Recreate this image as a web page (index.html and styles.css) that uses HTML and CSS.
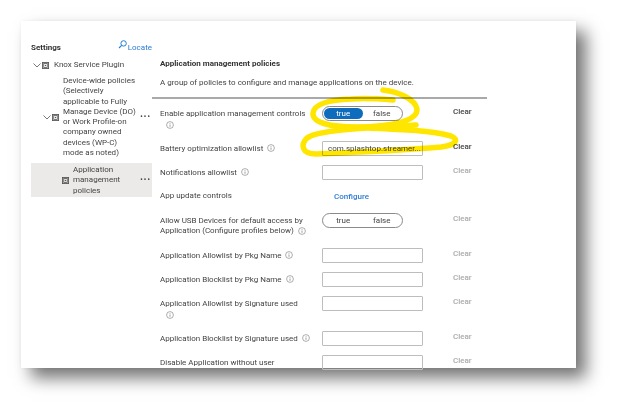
FILE: index.html
```html
<!DOCTYPE html>
<html lang="en">
<head>
<meta charset="utf-8">
<title>Application management policies</title>
<link rel="stylesheet" href="styles.css">
</head>
<body>
<svg width="0" height="0" class="defs" aria-hidden="true">
  <symbol id="plug" viewBox="0 0 8 8"><rect x=".5" y=".5" width="7" height="7" fill="none" stroke="#555"/><rect x="2" y="1.8" width="4" height="4.4" fill="none" stroke="#555" stroke-width=".9"/><rect x="3.3" y="3.3" width="1.4" height="1.4" fill="#555"/></symbol>
  <symbol id="chev" viewBox="0 0 8 5"><path d="M.5.5 4 4 7.5.5" fill="none" stroke="#555" stroke-width=".8"/></symbol>
  <symbol id="info" viewBox="0 0 8 8"><circle cx="4" cy="4" r="3.4" fill="none" stroke="#777" stroke-width=".6"/><path d="M4 3.5v2.3M4 2.2v.7" stroke="#777" stroke-width=".7"/></symbol>
</svg>
<main class="shot">
  <aside class="side">
    <div class="side-head">
      <span class="settings">Settings</span>
      <span class="locate">
        <svg class="search" viewBox="0 0 9 9"><circle cx="5.6" cy="3.4" r="2.7" fill="none" stroke="#1f7fd6"/><path d="M3.6 5.4 1 8" stroke="#1f7fd6" stroke-width="1.1"/></svg>
        <span class="locate-text">Locate</span>
      </span>
    </div>
    <div class="node node-root">
      <svg class="chev"><use href="#chev"/></svg>
      <svg class="plug"><use href="#plug"/></svg>
      <span class="node-text">Knox Service Plugin</span>
    </div>
    <div class="node node-device">
      <svg class="chev"><use href="#chev"/></svg>
      <svg class="plug"><use href="#plug"/></svg>
      <span class="node-text wrap">Device-wide policies (Selectively applicable to Fully Manage Device (DO) or Work Profile-on company owned devices (WP-C) mode as noted)</span>
      <span class="dots">···</span>
    </div>
    <div class="node node-app">
      <svg class="plug"><use href="#plug"/></svg>
      <span class="node-text wrap">Application management policies</span>
      <span class="dots">···</span>
    </div>
  </aside>
  <section class="content">
    <h1 class="title">Application management policies</h1>
    <p class="desc">A group of policies to configure and manage applications on the device.</p>
    <div class="rule"></div>
    <div class="row row-a">
      <div class="label">Enable application management controls <svg class="info info-below"><use href="#info"/></svg></div>
      <div class="toggle"><span class="opt on">true</span><span class="opt">false</span></div>
      <span class="clear dark">Clear</span>
    </div>
    <div class="row row-b">
      <div class="label">Battery optimization allowlist <svg class="info"><use href="#info"/></svg></div>
      <div class="field">com.splashtop.streamer...</div>
      <span class="clear dark">Clear</span>
    </div>
    <div class="row row-c">
      <div class="label">Notifications allowlist <svg class="info"><use href="#info"/></svg></div>
      <div class="field"></div>
      <span class="clear">Clear</span>
    </div>
    <div class="row row-d">
      <div class="label">App update controls</div>
      <a class="configure">Configure</a>
    </div>
    <div class="row row-e">
      <div class="label">Allow USB Devices for default access by Application (Configure profiles below) <svg class="info"><use href="#info"/></svg></div>
      <div class="toggle"><span class="opt">true</span><span class="opt">false</span></div>
      <span class="clear">Clear</span>
    </div>
    <div class="row row-c">
      <div class="label">Application Allowlist by Pkg Name <svg class="info"><use href="#info"/></svg></div>
      <div class="field"></div>
      <span class="clear">Clear</span>
    </div>
    <div class="row row-c">
      <div class="label">Application Blocklist by Pkg Name <svg class="info"><use href="#info"/></svg></div>
      <div class="field"></div>
      <span class="clear">Clear</span>
    </div>
    <div class="row row-f">
      <div class="label">Application Allowlist by Signature used <svg class="info info-below"><use href="#info"/></svg></div>
      <div class="field"></div>
      <span class="clear">Clear</span>
    </div>
    <div class="row row-c">
      <div class="label">Application Blocklist by Signature used <svg class="info"><use href="#info"/></svg></div>
      <div class="field"></div>
      <span class="clear">Clear</span>
    </div>
    <div class="row row-c">
      <div class="label">Disable Application without user</div>
      <div class="field"></div>
      <span class="clear">Clear</span>
    </div>
  </section>
  <svg class="marker" viewBox="0 0 555 347" aria-hidden="true">
    <path d="M362 69C378 71 394 78 396 88C397 100 370 106 335 106C310 106 291 102 292 92C293 84 305 79 330 78C345 77 360 78 372 79" />
    <path d="M325 106C360 108 405 108 430 115C438 118 436 124 420 126C385 129 320 132 295 133C281 133 279 124 286 117C296 109 340 107 395 104" />
  </svg>
</main>
</body>
</html>
```
FILE: styles.css
```css
* { box-sizing: border-box; }
html, body { margin: 0; padding: 0; background: #fff; }
body { width: 617px; height: 410px; overflow: hidden; padding: 21px 0 0 21px; font-family: Roboto, "Open Sans", sans-serif; font-size: 8px; color: #444; }
.defs { position: absolute; }
.shot { position: relative; width: 555px; height: 347px; background: #fff; display: flex; box-shadow: 10px 10px 16px rgba(0,0,0,.55), 0 0 4px rgba(0,0,0,.05); filter: blur(.25px); }
.side { width: 131px; flex: none; padding: 21px 0 0 10px; height: 347px; overflow: hidden; }
.side-head { display: flex; justify-content: space-between; align-items: center; height: 10px; }
.settings { font-weight: 700; color: #333; }
.locate { display: flex; align-items: flex-start; color: #2b7cd3; }
.search { width: 9px; height: 9px; margin-right: 1px; margin-top: -2px; }
.locate-text { line-height: 10px; margin-top: 1px; }
.node { display: flex; align-items: center; line-height: 10.3px; color: #444; }
.chev { width: 8px; height: 5px; flex: none; }
.plug { width: 7px; height: 7px; flex: none; }
.dots { flex: none; width: 11px; font-size: 10px; font-weight: 700; color: #444; letter-spacing: .6px; }
.node-root { margin: 8px 0 0 2px; height: 11px; }
.node-root .plug { margin-left: 1px; }
.node-root .node-text { margin-left: 5px; }
.node-device { margin: 5px 0 0 12px; }
.node-device .plug { margin-left: 1px; }
.node-device .wrap { width: 76px; margin-left: 4px; }
.node-device .dots { margin-left: 1px; }
.node-app { margin-top: 5px; height: 34px; background: #eceae8; padding-left: 31px; }
.node-app .wrap { width: 62px; margin-left: 4px; }
.node-app .dots { margin-left: 5px; }
.content { width: 335px; flex: none; padding-left: 8px; }
.title { font-size: 8px; font-weight: 700; color: #333; margin: 37px 0 0; line-height: 11px; }
.desc { margin: 8px 0 0; line-height: 11px; color: #444; }
.rule { height: 1.5px; background: #a9a9a9; margin: 9px 0 0 -8px; }
.row { display: flex; align-items: flex-start; }
.label { width: 162px; flex: none; line-height: 10.5px; color: #444; padding-top: 3px; padding-right: 8px; }
.info { width: 8px; height: 8px; vertical-align: -1.5px; margin-left: 2px; }
.info-below { display: block; margin: 1.5px 0 0 6px; }
.toggle { width: 81px; height: 15px; flex: none; border: 1px solid #8a8a8a; border-radius: 8px; display: flex; padding: 1px; margin-right: 20px; }
.opt { flex: 1; text-align: center; line-height: 11px; border-radius: 7px; color: #444; }
.opt.on { background: #0f6cbd; color: #fff; }
.field { width: 101px; height: 15px; flex: none; border: 1px solid #bdbdbd; border-radius: 1px; color: #444; padding: 0 5px; line-height: 13px; white-space: nowrap; overflow: hidden; }
.clear { margin-left: 30px; color: #aaa; font-weight: 500; line-height: 11px; }
.clear.dark { color: #444; }
.row-a { height: 35px; margin-top: 7px; }
.row-b { height: 24px; }
.row-c { height: 24px; }
.row-d { height: 24px; padding-top: 2px; }
.row-d .label { padding-top: 0; }
.configure { color: #2b7cd3; font-weight: 500; margin-left: 12px; line-height: 11px; }
.row-e { height: 35px; }
.row-f { height: 35px; }
.marker { position: absolute; left: 0; top: 0; width: 555px; height: 347px; fill: none; stroke: #ffe600; stroke-width: 5.5; stroke-linecap: round; pointer-events: none; mix-blend-mode: multiply; }
```
